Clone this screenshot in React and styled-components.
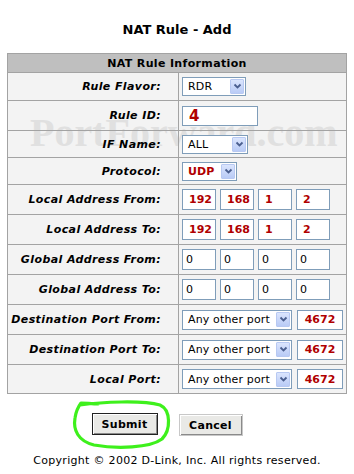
import React from 'react';
import styled, { createGlobalStyle } from 'styled-components';

const Global = createGlobalStyle`
  html, body { margin: 0; padding: 0; background: #fff; }
  body {
    width: 354px; height: 474px; overflow: hidden;
    font-family: "DejaVu Sans", Verdana, sans-serif;
    color: #000;
  }
`;

const Page = styled.div`
  width: 354px;
  height: 474px;
  display: flex;
  flex-direction: column;
`;

const Title = styled.h1`
  margin: 0;
  height: 53px;
  box-sizing: border-box;
  padding-top: 22px;
  font-size: 13px;
  line-height: 16px;
  font-weight: bold;
  text-align: center;
`;

const TableWrap = styled.div`
  position: relative;
  margin-left: 7px;
  width: 340px;
  box-sizing: border-box;
  border: 1px solid #a3a3a3;
  background: #f3f3f3;
`;

const Watermark = styled.div`
  position: absolute;
  left: 22px;
  top: 59px;
  font-family: "Liberation Serif", "Times New Roman", serif;
  font-weight: bold;
  font-size: 40px;
  line-height: 40px;
  color: #e0e0e0;
  pointer-events: none;
  z-index: 0;
`;

const Grid = styled.div`
  position: relative;
  z-index: 1;
  display: grid;
  grid-template-columns: 171px 1fr;
`;

const Header = styled.div`
  grid-column: 1 / span 2;
  height: 19px;
  box-sizing: border-box;
  border-bottom: 1px solid #a3a3a3;
  background: #bfbfbf;
  font-size: 11px;
  font-weight: bold;
  letter-spacing: 0.35px;
  display: flex;
  align-items: center;
  justify-content: center;
`;

const LabelCell = styled.div`
  height: ${p => p.$h}px;
  box-sizing: border-box;
  border-right: 1px solid #a3a3a3;
  border-bottom: ${p => (p.$last ? 'none' : '1px solid #a3a3a3')};
  display: flex;
  align-items: center;
  justify-content: flex-end;
  padding-right: 17px;
  font-size: 11px;
  font-weight: bold;
  font-style: italic;
  letter-spacing: 0.4px;
  white-space: nowrap;
`;

const FieldCell = styled.div`
  height: ${p => p.$h}px;
  box-sizing: border-box;
  border-bottom: ${p => (p.$last ? 'none' : '1px solid #a3a3a3')};
  display: flex;
  align-items: center;
  padding-left: 3px;
  gap: ${p => p.$gap || 4}px;
`;

const SelectBox = styled.div`
  display: flex;
  align-items: center;
  box-sizing: border-box;
  width: ${p => p.$w}px;
  height: ${p => p.$h || 19}px;
  border: 1px solid #7f9db9;
  background: #fff;
  padding: 0 1px 0 5px;
`;

const SelectText = styled.span`
  flex: 1;
  font-size: 11px;
  font-weight: ${p => (p.$red ? 'bold' : 'normal')};
  color: ${p => (p.$red ? '#b00000' : '#000')};
  letter-spacing: 0.15px;
  white-space: nowrap;
`;

const ArrowBtn = styled.span`
  width: 14px;
  height: 15px;
  box-sizing: border-box;
  border: 1px solid #b8c9f2;
  border-radius: 1px;
  background: linear-gradient(#dbe5fd, #b9cbf6);
  display: flex;
  align-items: center;
  justify-content: center;
`;

const TextBox = styled.input`
  box-sizing: border-box;
  width: ${p => p.$w}px;
  height: ${p => p.$h || 20}px;
  margin: 0;
  border: 1px solid #7f9db9;
  background: #fff;
  padding: 0 0 0 ${p => p.$pl ?? 3}px;
  font-family: "DejaVu Sans", Verdana, sans-serif;
  font-size: ${p => p.$fs || 11}px;
  font-weight: ${p => (p.$red ? 'bold' : 'normal')};
  color: ${p => (p.$red ? '#b00000' : '#000')};
  text-align: ${p => p.$align || 'left'};
  outline: none;
`;

const ButtonRow = styled.div`
  display: flex;
  justify-content: center;
  gap: 21px;
  padding-right: 20px;
  margin-top: 20px;
  height: 22px;
`;

const HighlightWrap = styled.div`
  position: relative;
  display: flex;
`;

const Circle = styled.svg`
  position: absolute;
  left: -20px;
  top: -14px;
  overflow: visible;
  pointer-events: none;
`;

const Button = styled.button`
  box-sizing: border-box;
  width: ${p => p.$w}px;
  height: 22px;
  margin: 0;
  padding: 0;
  font-family: "DejaVu Sans", Verdana, sans-serif;
  font-size: 11px;
  font-weight: bold;
  letter-spacing: 0.3px;
  color: #000;
  background: #e9e9e6;
  border: 1px solid ${p => (p.$default ? '#222' : '#c8c8c8')};
  box-shadow: inset 1px 1px 0 #fff, inset -1px -1px 0 #8a8a8a;
  ${p => (p.$default ? 'margin-top: -1px;' : '')}
`;

const Copyright = styled.div`
  margin-top: 18px;
  text-align: center;
  font-size: 11px;
  letter-spacing: 0.3px;
  line-height: 14px;
`;

const Chevron = () => (
  <svg width="9" height="7" viewBox="0 0 9 7">
    <path d="M1.5 1.5 L4.5 4.5 L7.5 1.5" fill="none" stroke="#4b5f8f" strokeWidth="1.8" />
  </svg>
);

const Select = ({ w, h, value, red }) => (
  <SelectBox $w={w} $h={h}>
    <SelectText $red={red}>{value}</SelectText>
    <ArrowBtn><Chevron /></ArrowBtn>
  </SelectBox>
);

const IP = ({ parts, red }) => (
  <>
    {parts.map((v, i) => (
      <TextBox key={i} $w={34} $h={21} readOnly value={v} $red={red} $pl={red ? 6 : 3} />
    ))}
  </>
);

const PortField = () => (
  <>
    <Select w={110} h={20} value="Any other port" />
    <TextBox $w={46} $h={20} readOnly value="4672" $red $align="center" $pl={0} />
  </>
);

const rows = [
  { label: 'Rule Flavor:', h: 28, field: <Select w={64} value="RDR" /> },
  { label: 'Rule ID:', h: 30, field: <TextBox $w={76} $h={20} readOnly value="4" $red $fs={15} $pl={6} /> },
  { label: 'IF Name:', h: 27, field: <Select w={66} value="ALL" /> },
  { label: 'Protocol:', h: 27, field: <Select w={55} value="UDP" red /> },
  { label: 'Local Address From:', h: 30, field: <IP parts={['192', '168', '1', '2']} red /> },
  { label: 'Local Address To:', h: 30, field: <IP parts={['192', '168', '1', '2']} red /> },
  { label: 'Global Address From:', h: 30, field: <IP parts={['0', '0', '0', '0']} /> },
  { label: 'Global Address To:', h: 30, field: <IP parts={['0', '0', '0', '0']} /> },
  { label: 'Destination Port From:', h: 30, gap: 5, field: <PortField /> },
  { label: 'Destination Port To:', h: 30, gap: 5, field: <PortField /> },
  { label: 'Local Port:', h: 28, gap: 5, field: <PortField /> },
];

export default function App() {
  return (
    <Page>
      <Global />
      <Title>NAT Rule - Add</Title>
      <TableWrap>
        <Watermark>PortForward.com</Watermark>
        <Grid>
          <Header>NAT Rule Information</Header>
          {rows.map((r, i) => {
            const last = i === rows.length - 1;
            return (
              <React.Fragment key={r.label}>
                <LabelCell $h={r.h} $last={last}>{r.label}</LabelCell>
                <FieldCell $h={r.h} $last={last} $gap={r.gap}>{r.field}</FieldCell>
              </React.Fragment>
            );
          })}
        </Grid>
      </TableWrap>
      <ButtonRow>
        <HighlightWrap>
          <Button $w={66} $default>Submit</Button>
          <Circle width="100" height="50" viewBox="0 0 100 50">
            <path
              d="M8 5 C30 2, 70 0, 88 5 C99 10, 99 30, 90 39 C78 48, 45 49, 22 45 C6 41, 1 30, 3 18 C4 11, 6 7, 9 3 C14 3, 20 4, 26 4"
              fill="none"
              stroke="#3ef01c"
              strokeWidth="3.2"
              strokeLinecap="round"
              strokeLinejoin="round"
            />
          </Circle>
        </HighlightWrap>
        <Button $w={64}>Cancel</Button>
      </ButtonRow>
      <Copyright>Copyright © 2002 D-Link, Inc. All rights reserved.</Copyright>
    </Page>
  );
}
